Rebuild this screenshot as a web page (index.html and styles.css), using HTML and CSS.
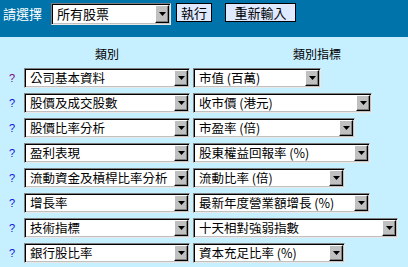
FILE: index.html
```html
<!DOCTYPE html>
<html lang="zh-Hant">
<head>
    <meta charset="UTF-8">
    <title>股票篩選</title>
    <link rel="stylesheet" href="styles.css">
</head>
<body>
    <!-- Top bar -->
    <div class="topbar">
        <span class="label">請選擇</span>
        <div class="combo market">
            <span class="value">所有股票</span>
            <span class="arrow"><svg width="7" height="4" viewBox="0 0 7 4"><path d="M0 0h7L3.5 4z" fill="#000"/></svg></span>
        </div>
        <button class="btn">執行</button>
        <button class="btn reset">重新輸入</button>
    </div>

    <div class="filters">
        <div class="head"></div>
        <div class="head">類別</div>
        <div class="head right">類別指標</div>

        <a class="help visited" href="#">?</a>
        <div class="combo cat"><span class="value">公司基本資料</span><span class="arrow"><svg width="7" height="4" viewBox="0 0 7 4"><path d="M0 0h7L3.5 4z" fill="#000"/></svg></span></div>
        <div class="combo w128"><span class="value">市值 (百萬)</span><span class="arrow"><svg width="7" height="4" viewBox="0 0 7 4"><path d="M0 0h7L3.5 4z" fill="#000"/></svg></span></div>

        <a class="help" href="#">?</a>
        <div class="combo cat"><span class="value">股價及成交股數</span><span class="arrow"><svg width="7" height="4" viewBox="0 0 7 4"><path d="M0 0h7L3.5 4z" fill="#000"/></svg></span></div>
        <div class="combo w179"><span class="value">收市價 (港元)</span><span class="arrow"><svg width="7" height="4" viewBox="0 0 7 4"><path d="M0 0h7L3.5 4z" fill="#000"/></svg></span></div>

        <a class="help" href="#">?</a>
        <div class="combo cat"><span class="value">股價比率分析</span><span class="arrow"><svg width="7" height="4" viewBox="0 0 7 4"><path d="M0 0h7L3.5 4z" fill="#000"/></svg></span></div>
        <div class="combo w162"><span class="value">市盈率 (倍)</span><span class="arrow"><svg width="7" height="4" viewBox="0 0 7 4"><path d="M0 0h7L3.5 4z" fill="#000"/></svg></span></div>

        <a class="help" href="#">?</a>
        <div class="combo cat"><span class="value">盈利表現</span><span class="arrow"><svg width="7" height="4" viewBox="0 0 7 4"><path d="M0 0h7L3.5 4z" fill="#000"/></svg></span></div>
        <div class="combo w177"><span class="value">股東權益回報率 (%)</span><span class="arrow"><svg width="7" height="4" viewBox="0 0 7 4"><path d="M0 0h7L3.5 4z" fill="#000"/></svg></span></div>

        <a class="help" href="#">?</a>
        <div class="combo cat"><span class="value">流動資金及槓桿比率分析</span><span class="arrow"><svg width="7" height="4" viewBox="0 0 7 4"><path d="M0 0h7L3.5 4z" fill="#000"/></svg></span></div>
        <div class="combo w152"><span class="value">流動比率 (倍)</span><span class="arrow"><svg width="7" height="4" viewBox="0 0 7 4"><path d="M0 0h7L3.5 4z" fill="#000"/></svg></span></div>

        <a class="help" href="#">?</a>
        <div class="combo cat"><span class="value">增長率</span><span class="arrow"><svg width="7" height="4" viewBox="0 0 7 4"><path d="M0 0h7L3.5 4z" fill="#000"/></svg></span></div>
        <div class="combo w177"><span class="value">最新年度營業額增長 (%)</span><span class="arrow"><svg width="7" height="4" viewBox="0 0 7 4"><path d="M0 0h7L3.5 4z" fill="#000"/></svg></span></div>

        <a class="help" href="#">?</a>
        <div class="combo cat"><span class="value">技術指標</span><span class="arrow"><svg width="7" height="4" viewBox="0 0 7 4"><path d="M0 0h7L3.5 4z" fill="#000"/></svg></span></div>
        <div class="combo w205"><span class="value">十天相對強弱指數</span><span class="arrow"><svg width="7" height="4" viewBox="0 0 7 4"><path d="M0 0h7L3.5 4z" fill="#000"/></svg></span></div>

        <a class="help" href="#">?</a>
        <div class="combo cat"><span class="value">銀行股比率</span><span class="arrow"><svg width="7" height="4" viewBox="0 0 7 4"><path d="M0 0h7L3.5 4z" fill="#000"/></svg></span></div>
        <div class="combo w152"><span class="value">資本充足比率 (%)</span><span class="arrow"><svg width="7" height="4" viewBox="0 0 7 4"><path d="M0 0h7L3.5 4z" fill="#000"/></svg></span></div>
    </div>
</body>
</html>
```

FILE: styles.css
```css
/* Reset */
* {
    margin: 0;
    padding: 0;
    box-sizing: border-box;
}

body {
    background: #c6efff;
    font-family: "Noto Sans CJK TC", "Liberation Sans", sans-serif;
    font-size: 13px;
    color: #000;
}

/* Top bar */
.topbar {
    background: #0073aa;
    height: 37px;
    padding: 3px 0 0 3px;
    display: flex;
    align-items: flex-start;
}

.label {
    color: #fff;
    font-size: 13px;
    line-height: 21px;
    width: 48px;
}

.btn {
    font-family: inherit;
    font-size: 13px;
    line-height: 16px;
    height: 19px;
    background: #dfe9ff;
    border: 1px solid #000;
    padding: 0 4px;
    color: #000;
    margin-left: 5px;
}

.reset {
    margin-left: 13px;
    width: 71px;
}

/* Combo boxes */
.combo {
    height: 20px;
    display: flex;
    align-items: stretch;
    background: #fff;
    border: 1px solid;
    border-color: #808080 #e8e8e8 #e8e8e8 #808080;
    box-shadow: inset 1px 1px #000, inset -1px -1px #c0c0c0;
    padding: 1px;
    font-size: 12.5px;
}

.value {
    flex: 1;
    line-height: 16px;
    padding-left: 4px;
    white-space: nowrap;
}

.arrow {
    width: 14px;
    flex: none;
    background: #c0c0c0;
    border: 1px solid;
    border-color: #fff #000 #000 #fff;
    box-shadow: inset -1px -1px #808080;
    display: flex;
    align-items: center;
    justify-content: center;
}

.market {
    width: 120px;
    height: 22px;
    font-size: 13px;
}

.market .value {
    line-height: 18px;
}

/* Filter grid */
.filters {
    display: grid;
    grid-template-columns: 21px 166px 1fr;
    column-gap: 3px;
    row-gap: 5px;
    padding-top: 10px;
    align-items: center;
}

.head {
    font-size: 12px;
    line-height: 14px;
    text-align: center;
    margin-bottom: 2px;
}

.head.right {
    text-align: left;
    padding-left: 100px;
}

.help {
    font-family: "Liberation Sans", sans-serif;
    font-size: 11px;
    color: #1010e0;
    text-decoration: none;
    padding-left: 9px;
}

.help.visited {
    color: #800080;
}

.cat {
    width: 166px;
}

.w128 { width: 128px; }
.w152 { width: 152px; }
.w162 { width: 162px; }
.w177 { width: 177px; }
.w179 { width: 179px; }
.w205 { width: 205px; }
```
